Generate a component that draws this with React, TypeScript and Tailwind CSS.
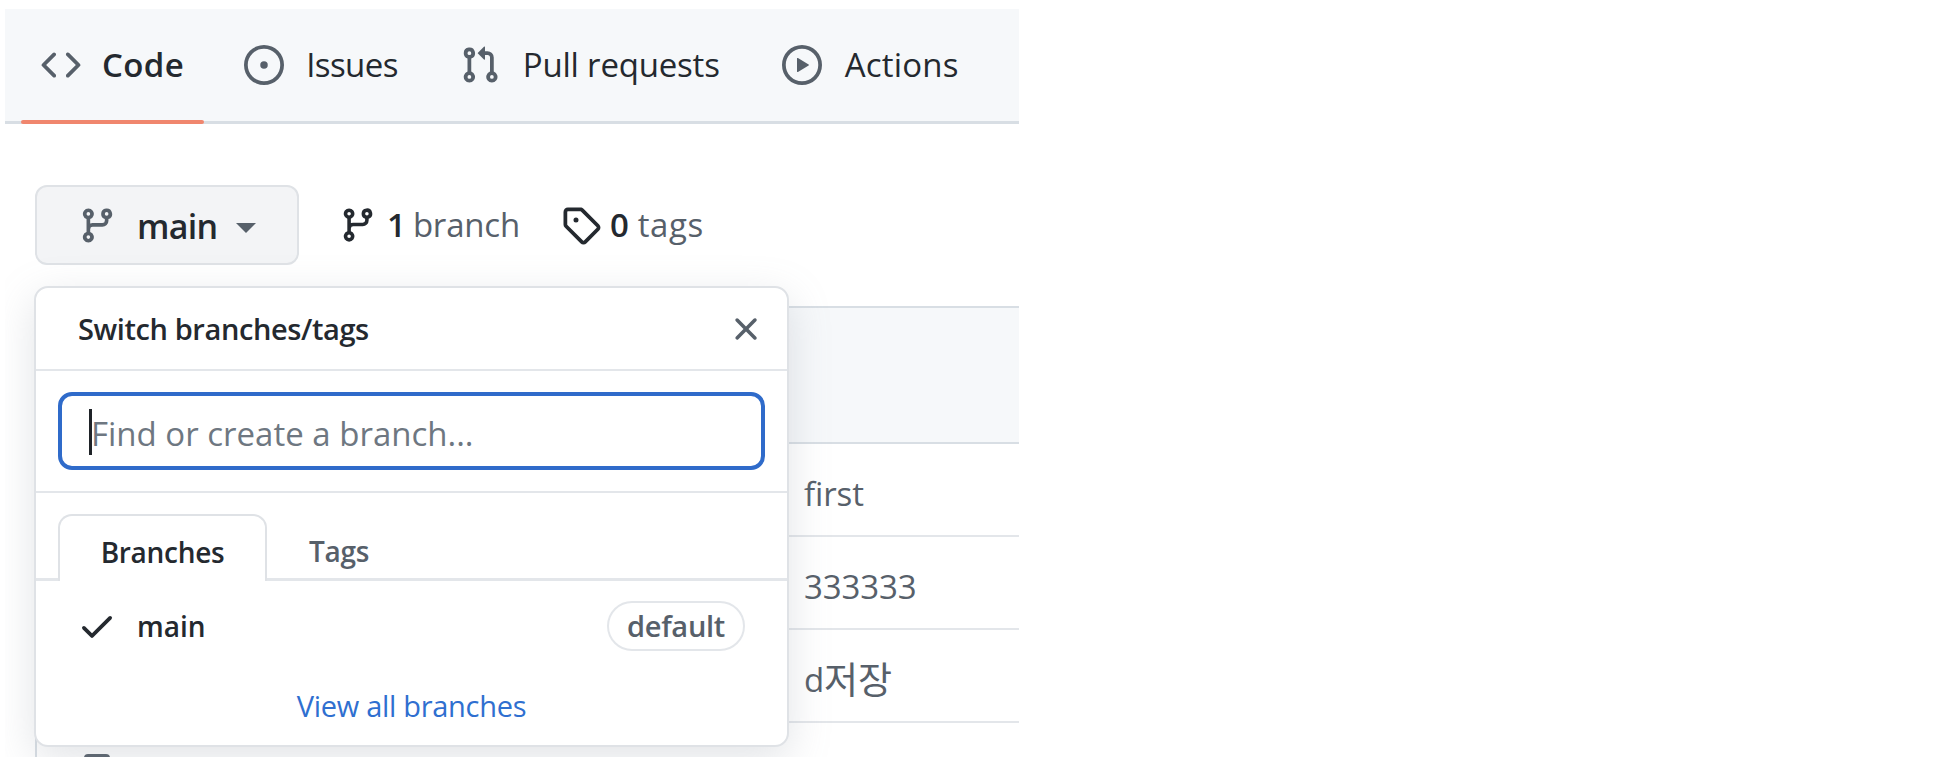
import type { ReactNode } from "react";

const P: Record<string, string> = {
  code: "m11.28 3.22 4.25 4.25a.75.75 0 0 1 0 1.06l-4.25 4.25a.749.749 0 0 1-1.275-.326.749.749 0 0 1 .215-.734L13.94 8l-3.72-3.72a.749.749 0 0 1 .326-1.275.749.749 0 0 1 .734.215Zm-6.56 0a.751.751 0 0 1 1.042.018.751.751 0 0 1 .018 1.042L2.06 8l3.72 3.72a.749.749 0 0 1-.326 1.275.749.749 0 0 1-.734-.215L.47 8.53a.75.75 0 0 1 0-1.06Z",
  issue: "M8 9.5a1.5 1.5 0 1 0 0-3 1.5 1.5 0 0 0 0 3ZM8 0a8 8 0 1 1 0 16A8 8 0 0 1 8 0ZM1.5 8a6.5 6.5 0 1 0 13 0 6.5 6.5 0 0 0-13 0Z",
  pr: "M1.5 3.25a2.25 2.25 0 1 1 3 2.122v5.256a2.251 2.251 0 1 1-1.5 0V5.372A2.25 2.25 0 0 1 1.5 3.25Zm5.677-.177L9.573.677A.25.25 0 0 1 10 .854V2.5h1A2.5 2.5 0 0 1 13.5 5v5.628a2.251 2.251 0 1 1-1.5 0V5a1 1 0 0 0-1-1h-1v1.646a.25.25 0 0 1-.427.177L7.177 3.427a.25.25 0 0 1 0-.354ZM3.75 2.5a.75.75 0 1 0 0 1.5.75.75 0 0 0 0-1.5Zm0 9.5a.75.75 0 1 0 0 1.5.75.75 0 0 0 0-1.5Zm8.25.75a.75.75 0 1 0 1.5 0 .75.75 0 0 0-1.5 0Z",
  play: "M8 0a8 8 0 1 1 0 16A8 8 0 0 1 8 0ZM1.5 8a6.5 6.5 0 1 0 13 0 6.5 6.5 0 0 0-13 0Zm4.879-2.773 4.264 2.559a.25.25 0 0 1 0 .428l-4.264 2.559A.25.25 0 0 1 6 10.559V5.442a.25.25 0 0 1 .379-.215Z",
  branch: "M9.5 3.25a2.25 2.25 0 1 1 3 2.122V6A2.5 2.5 0 0 1 10 8.5H6a1 1 0 0 0-1 1v1.128a2.251 2.251 0 1 1-1.5 0V5.372a2.25 2.25 0 1 1 1.5 0v1.836A2.493 2.493 0 0 1 6 7h4a1 1 0 0 0 1-1v-.628A2.25 2.25 0 0 1 9.5 3.25Zm-6 0a.75.75 0 1 0 1.5 0 .75.75 0 0 0-1.5 0Zm8.25-.75a.75.75 0 1 0 0 1.5.75.75 0 0 0 0-1.5ZM4.25 12a.75.75 0 1 0 0 1.5.75.75 0 0 0 0-1.5Z",
  tag: "M1 7.775V2.75C1 1.784 1.784 1 2.75 1h5.025c.464 0 .91.184 1.238.513l6.25 6.25a1.75 1.75 0 0 1 0 2.474l-5.026 5.026a1.75 1.75 0 0 1-2.474 0l-6.25-6.25A1.752 1.752 0 0 1 1 7.775Zm1.5 0c0 .066.026.13.073.177l6.25 6.25a.25.25 0 0 0 .354 0l5.025-5.025a.25.25 0 0 0 0-.354l-6.25-6.25a.25.25 0 0 0-.177-.073H2.75a.25.25 0 0 0-.25.25ZM6 5a1 1 0 1 1 0 2 1 1 0 0 1 0-2Z",
  x: "M3.72 3.72a.75.75 0 0 1 1.06 0L8 6.94l3.22-3.22a.749.749 0 0 1 1.275.326.749.749 0 0 1-.215.734L9.06 8l3.22 3.22a.749.749 0 0 1-.326 1.275.749.749 0 0 1-.734-.215L8 9.06l-3.22 3.22a.751.751 0 0 1-1.042-.018.751.751 0 0 1-.018-1.042L6.94 8 3.72 4.78a.75.75 0 0 1 0-1.06Z",
  check: "M13.78 4.22a.75.75 0 0 1 0 1.06l-7.25 7.25a.75.75 0 0 1-1.06 0L2.22 9.28a.751.751 0 0 1 .018-1.042.751.751 0 0 1 1.042-.018L6 10.94l6.72-6.72a.75.75 0 0 1 1.06 0Z",
};

function Oct({ n, className }: { n: string; className: string }) {
  return (
    <svg viewBox="0 0 16 16" fill="currentColor" className={className}>
      <path fillRule="evenodd" d={P[n]} />
    </svg>
  );
}

function Tab({ icon, label, labelClass, className }: { icon: string; label: string; labelClass: string; className: string }) {
  return (
    <div className={`flex items-center h-[114px] ${className}`}>
      <Oct n={icon} className="w-[40px] h-[40px] text-[#57606a] shrink-0" />
      <span className={`text-[33px] text-[#24292f] ${labelClass}`}>{label}</span>
    </div>
  );
}

function Row({ children }: { children: ReactNode }) {
  return (
    <div className="h-[93px] flex items-center pl-[767px] pt-[8px] text-[33px] tracking-[-0.1px] text-[#57606a] border-b-2 border-[#e3e6ea]">
      {children}
    </div>
  );
}

export default function App() {
  return (
    <div className="w-full h-[766px] bg-white overflow-hidden" style={{ fontFamily: '"Open Sans", "Noto Sans CJK KR", sans-serif' }}>
      <div className="relative ml-[5px] mt-[9px] w-[1014px] h-[748px] overflow-hidden pt-[0.02px]">
        <div className="relative h-[115px] bg-[#f6f8fa] border-b-[3px] border-[#d8dee4] flex items-center pl-[36px]">
          <Tab icon="code" label="Code" labelClass="font-semibold tracking-[0.4px]" className="gap-[21px]" />
          <Tab icon="issue" label="Issues" labelClass="tracking-[-0.6px]" className="gap-[22px] ml-[60px]" />
          <Tab icon="pr" label="Pull requests" labelClass="tracking-[-0.2px]" className="gap-[23px] ml-[62px]" />
          <Tab icon="play" label="Actions" labelClass="tracking-[0.2px]" className="gap-[23px] ml-[62px]" />
          <div className="absolute left-[16px] bottom-[-3px] w-[183px] h-[4px] bg-[#f0866e] rounded-[2px]" />
        </div>

        <div className="flex items-center mt-[61px] ml-[30px] h-[80px]">
          <div className="w-[264px] h-[80px] rounded-[12px] border-2 border-[#dfe2e6] bg-[#f3f4f6] flex items-center pl-[41px]">
            <Oct n="branch" className="w-[39px] h-[39px] text-[#57606a]" />
            <span className="ml-[20px] mt-[3px] text-[34px] font-semibold tracking-[-0.7px] text-[#24292f]">main</span>
            <span className="ml-[19px] mt-[6px] border-x-[10px] border-t-[10px] border-x-transparent border-t-[#57606a]" />
          </div>
          <Oct n="branch" className="ml-[40px] w-[38px] h-[38px] text-[#24292f]" />
          <span className="ml-[10px] text-[33px] font-semibold text-[#24292f]">1</span>
          <span className="ml-[7px] text-[33px] tracking-[-0.2px] text-[#57606a]">branch</span>
          <Oct n="tag" className="ml-[41px] w-[40px] h-[40px] text-[#24292f]" />
          <span className="ml-[9px] text-[33px] font-semibold text-[#24292f]">0</span>
          <span className="ml-[9px] text-[33px] tracking-[0.5px] text-[#57606a]">tags</span>
        </div>

        <div className="mt-[41px] ml-[30px] w-[984px] border-l-2 border-[#d8dee4]">
          <div className="h-[138px] bg-[#f6f8fa] border-y-2 border-[#d8dee4]" />
          <Row>first</Row>
          <Row>333333</Row>
          <Row>
            d<span className="text-[37px]">저장</span>
          </Row>
          <div className="ml-[47px] mt-[31px] w-[26px] h-[20px] rounded-t-[4px] bg-[#57606a]" />
        </div>

        <div className="absolute left-[29px] top-[277px] w-[755px] h-[461px] bg-white rounded-[14px] border-2 border-[#dfe2e6] shadow-[0_12px_40px_rgba(140,149,159,0.25)] flex flex-col text-[#24292f]">
          <div className="h-[83px] shrink-0 flex items-center justify-between pl-[42px] pr-[22px] border-b-2 border-[#e3e6ea]">
            <span className="text-[29px] font-semibold tracking-[-0.4px]">Switch branches/tags</span>
            <Oct n="x" className="w-[38px] h-[38px] text-[#57606a]" />
          </div>
          <div className="h-[122px] shrink-0 flex items-center pl-[22px] pr-[22px] border-b-2 border-[#e3e6ea]">
            <div className="relative w-full h-[78px] rounded-[14px] border-[4px] border-[#2f6bca] flex items-center pl-[29px]">
              <span className="mt-[6px] text-[33px] text-[#6e7781]">Find or create a branch...</span>
              <span className="absolute left-[27px] top-[13px] w-[3px] h-[46px] bg-[#1f2328]" />
            </div>
          </div>
          <div className="h-[88px] shrink-0 flex items-end pl-[22px] border-b-[3px] border-[#e3e6ea]">
            <div className="w-[209px] h-[67px] -mb-[3px] rounded-t-[14px] border-2 border-b-0 border-[#dfe2e6] bg-white flex items-center justify-center text-[28px] font-semibold tracking-[-0.3px] pt-[7px]">Branches</div>
            <div className="ml-[42px] h-[66px] pt-[11px] flex items-center text-[28px] font-semibold tracking-[-0.3px] text-[#57606a]">Tags</div>
          </div>
          <div className="h-[70px] shrink-0 flex items-center pl-[41px] pr-[42px] justify-between mt-[10px]">
            <div className="flex items-center">
              <Oct n="check" className="w-[40px] h-[40px]" />
              <span className="ml-[20px] text-[28px] font-semibold tracking-[0px]">main</span>
            </div>
            <span className="w-[138px] h-[50px] rounded-full border-2 border-[#e3e6ea] flex items-center justify-center text-[29px] font-semibold tracking-[-0.3px] text-[#57606a]">default</span>
          </div>
          <div className="mt-[23px] text-center text-[29px] tracking-[-0.3px] text-[#2f6fd0]">View all branches</div>
        </div>
      </div>
    </div>
  );
}
